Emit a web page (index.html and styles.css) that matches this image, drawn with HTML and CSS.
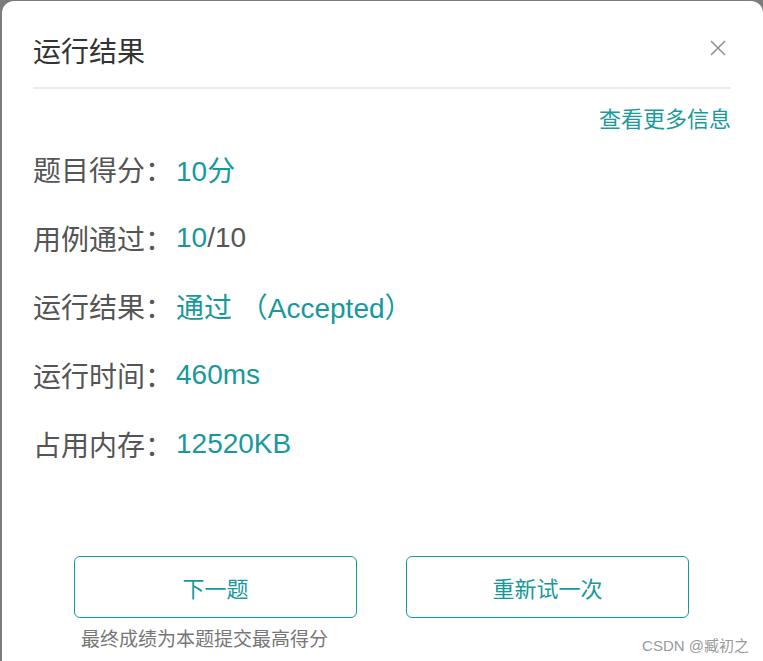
FILE: index.html
```html
<!DOCTYPE html>
<html lang="zh">
<head>
<meta charset="utf-8">
<link rel="stylesheet" href="styles.css">
</head>
<body>
<div class="dialog">
  <div class="header">
    <div class="title">运行结果</div>
    <svg class="close" width="16" height="16" viewBox="0 0 16 16"><path d="M1 1L15 15M15 1L1 15" stroke="#8f9296" stroke-width="1.6" fill="none"/></svg>
  </div>
  <div class="more-row"><span class="more">查看更多信息</span></div>
  <div class="rows">
    <div class="row"><span class="label">题目得分：</span><span class="val">10分</span></div>
    <div class="row"><span class="label">用例通过：</span><span class="val">10</span><span class="plain">/10</span></div>
    <div class="row"><span class="label">运行结果：</span><span class="val">通过 （Accepted）</span></div>
    <div class="row"><span class="label">运行时间：</span><span class="val">460ms</span></div>
    <div class="row"><span class="label">占用内存：</span><span class="val">12520KB</span></div>
  </div>
  <div class="actions">
    <div class="btn-col">
      <div class="btn">下一题</div>
      <div class="note">最终成绩为本题提交最高得分</div>
    </div>
    <div class="btn-col">
      <div class="btn">重新试一次</div>
    </div>
  </div>
  <div class="watermark">CSDN @臧初之</div>
</div>
</body>
</html>
```
FILE: styles.css
```css
html, body {
  margin: 0;
  padding: 0;
  background: #7c7c7c;
  overflow: hidden;
}
body {
  font-family: "Liberation Sans", "Noto Sans CJK SC", sans-serif;
}
.dialog {
  position: relative;
  margin: 1px 0 0 2px;
  width: 761px;
  height: 660px;
  background: #fff;
  border-radius: 12px 12px 0 0;
  padding: 0 32px 0 31px;
  box-sizing: border-box;
}
.header {
  display: flex;
  justify-content: space-between;
  align-items: flex-start;
  padding-top: 32px;
  padding-bottom: 14px;
  border-bottom: 2px solid #ebebeb;
}
.title {
  font-size: 28px;
  line-height: 40px;
  color: #333;
}
.close {
  margin-top: 7px;
  margin-right: 5px;
}
.more-row {
  display: flex;
  justify-content: flex-end;
  margin-top: 16px;
}
.more {
  font-size: 22px;
  line-height: 30px;
  color: #1a9a9c;
}
.rows {
  margin-top: 0;
}
.row {
  height: 68.6px;
  display: flex;
  align-items: center;
  font-size: 28px;
  color: #555;
}
.label {
  width: 143px;
}
.val {
  color: #17999b;
  white-space: pre;
}
.plain {
  color: #555;
}
.actions {
  display: flex;
  justify-content: center;
  gap: 49px;
  margin-top: 78px;
  margin-left: -1px;
}
.btn-col {
  width: 283px;
}
.btn {
  height: 62px;
  box-sizing: border-box;
  border: 1px solid #17999b;
  border-radius: 6px;
  display: flex;
  align-items: center;
  justify-content: center;
  font-size: 22px;
  color: #17999b;
}
.note {
  margin-top: 10px;
  padding-left: 7px;
  font-size: 19px;
  line-height: 24px;
  color: #777;
}
.watermark {
  position: absolute;
  right: 14px;
  bottom: 6px;
  font-size: 15px;
  color: #9a9a9a;
}
```
